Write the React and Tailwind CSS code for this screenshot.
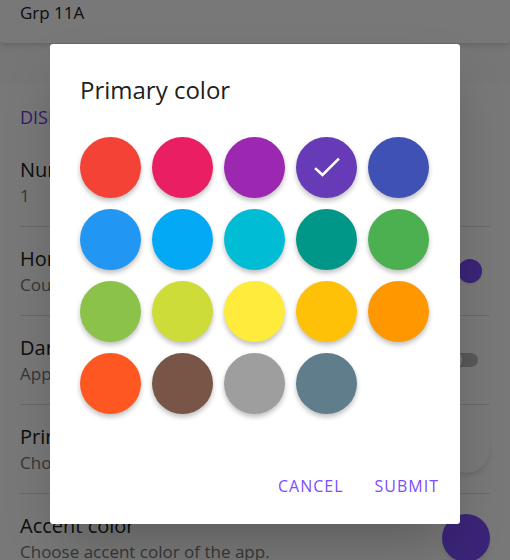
import { useState } from 'react'

const colors = [
  '#f44336', '#e91e63', '#9c27b0', '#673ab7', '#3f51b5',
  '#2196f3', '#03a9f4', '#00bcd4', '#009688', '#4caf50',
  '#8bc34a', '#cddc39', '#ffeb3b', '#ffc107', '#ff9800',
  '#ff5722', '#795548', '#9e9e9e', '#607d8b',
]

function Row({ title, subtitle, right, last }) {
  return (
    <div className={last ? 'mx-5' : 'mx-5 border-b border-[#e0e0e0]'}>
      <div className="flex items-center justify-between py-[18px]">
        <div className="min-w-0">
          <div className="text-[20px] leading-[28px] text-[#212121]">{title}</div>
          <div className="text-[17px] leading-[24px] text-[#757575]">{subtitle}</div>
        </div>
        {right}
      </div>
    </div>
  )
}

function Switch({ on }) {
  return (
    <div className="relative mr-3 h-[14px] w-[36px] rounded-full" style={{ background: on ? '#b39ddb' : '#bdbdbd' }}>
      <div
        className={`absolute top-[-5px] h-[24px] w-[24px] rounded-full shadow ${on ? 'right-[-4px] bg-[#7c4dff]' : 'left-[-4px] bg-white'}`}
      />
    </div>
  )
}

export default function App() {
  const [selected, setSelected] = useState('#673ab7')

  return (
    <div className="relative h-[560px] w-[510px] overflow-hidden bg-[#fafafa]" style={{ fontFamily: "'Open Sans', 'Noto Sans', sans-serif" }}>
      {/* Page behind the dialog */}
      <div className="flex h-[43px] items-start rounded-b-[4px] bg-white px-5 pt-[1px] shadow-md">
        <span className="text-[17px] leading-[24px] text-[#212121]">Grp 11A</span>
      </div>

      <div className="mt-10 rounded-[4px] bg-white pt-[22px] shadow-md">
        <div className="mx-5 mb-[9px] text-[18px] leading-[24px] text-[#6a3fd8]">DISPLAY</div>
        <Row title="Number of columns" subtitle="1" />
        <Row title="Home screen" subtitle="Count down to the next lesson" right={<Switch on />} />
        <Row title="Dark mode" subtitle="Apply dark theme to the app." right={<Switch />} />
        <Row
          title="Primary color"
          subtitle="Choose primary color of the app."
          right={<div className="h-12 w-12 shrink-0 rounded-full bg-white shadow-md" />}
        />
        <Row
          title="Accent color"
          subtitle="Choose accent color of the app."
          right={<div className="h-12 w-12 shrink-0 rounded-full bg-[#7c4dff] shadow-md" />}
          last
        />
      </div>

      {/* Backdrop */}
      <div className="absolute inset-0 bg-black/[0.53]" />

      {/* Dialog */}
      <div className="absolute inset-0 flex justify-center pt-[44px]">
        <div className="flex h-[480px] w-[410px] flex-col rounded-[3px] bg-white shadow-2xl">
          <h2 className="px-[30px] pt-[30px] text-[24px] font-normal leading-[32px] text-[#212121]">Primary color</h2>
          <div className="mt-[31px] grid grid-cols-[repeat(5,61px)] gap-[11px] px-[30px]">
            {colors.map((c) => (
              <button
                key={c}
                onClick={() => setSelected(c)}
                className="relative h-[61px] w-[61px] rounded-full shadow-[0_3px_5px_rgba(0,0,0,0.25)]"
                style={{ background: c }}
              >
                {selected === c && (
                  <svg viewBox="0 0 61 61" className="absolute inset-0 h-full w-full">
                    <polyline points="20,32 26.5,38 42,22.5" fill="none" stroke="white" strokeWidth="2.6" strokeLinecap="square" />
                  </svg>
                )}
              </button>
            ))}
          </div>
          <div className="mt-auto flex justify-end gap-[15px] pb-[20px] pr-[13px]">
            <button className="px-2 py-[6px] text-[16px] leading-[24px] tracking-[1px] text-[#7c4dff]">CANCEL</button>
            <button className="px-2 py-[6px] text-[16px] leading-[24px] tracking-[1px] text-[#7c4dff]">SUBMIT</button>
          </div>
        </div>
      </div>
    </div>
  )
}
